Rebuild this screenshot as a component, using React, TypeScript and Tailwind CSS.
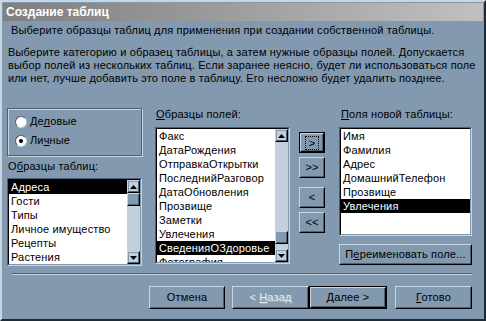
import type { ReactNode } from 'react'

// classic 3D edges in the slate-blue scheme
const raisedOuter = 'border border-t-[#c9d5e1] border-l-[#c9d5e1] border-r-black border-b-black'
const raisedInner = 'border border-t-[#8299b0] border-l-[#8299b0] border-r-[#4d5f75] border-b-[#4d5f75]'
const sunkenOuter = 'border border-t-[#4d5f75] border-l-[#4d5f75] border-r-[#c9d5e1] border-b-[#c9d5e1]'
const sunkenInner = 'border border-t-black border-l-black border-r-[#8299b0] border-b-[#8299b0]'

function Button({
  children,
  className = '',
  isDefault = false,
  focus = false,
  disabled = false,
}: {
  children: ReactNode
  className?: string
  isDefault?: boolean
  focus?: boolean
  disabled?: boolean
}) {
  const body = (
    <div className={`${raisedOuter} h-full w-full`}>
      <div
        className={`${raisedInner} h-full w-full flex items-center justify-center ${
          disabled ? 'text-[#e4ebf2] [text-shadow:1px_1px_0_#9cadbf]' : 'text-black'
        }`}
      >
        {focus ? (
          <div className="border border-dotted border-black px-[3px] leading-[12px]">{children}</div>
        ) : (
          children
        )}
      </div>
    </div>
  )
  if (isDefault) return <div className={`border border-black ${className}`}>{body}</div>
  return <div className={className}>{body}</div>
}

function Arrow({ up }: { up?: boolean }) {
  return (
    <svg width="7" height="4" viewBox="0 0 7 4">
      {up ? <path d="M3.5 0 L7 4 L0 4 Z" fill="black" /> : <path d="M0 0 L7 0 L3.5 4 Z" fill="black" />}
    </svg>
  )
}

function ScrollBtn({ up }: { up?: boolean }) {
  return (
    <div className={`${raisedOuter} h-[13px] w-full`}>
      <div className={`${raisedInner} h-full w-full flex items-center justify-center`}>
        <Arrow up={up} />
      </div>
    </div>
  )
}

function ScrollBar({ spacer }: { spacer: string }) {
  return (
    <div className="w-[13px] h-full flex flex-col bg-[#c3cfdb]">
      <ScrollBtn up />
      <div className={spacer} />
      <div className={`${raisedOuter} h-[13px] w-full`}>
        <div className={`${raisedInner} h-full w-full bg-[#8299b0]`} />
      </div>
      <div className="flex-1" />
      <ScrollBtn />
    </div>
  )
}

function ListBox({
  items,
  selected,
  className,
  scroll,
}: {
  items: string[]
  selected: number
  className: string
  scroll?: string
}) {
  return (
    <div className={`${sunkenOuter} ${className}`}>
      <div className={`${sunkenInner} h-full w-full bg-white flex overflow-hidden`}>
        <div className="flex-1 overflow-hidden">
          {items.map((it, i) => (
            <div
              key={it}
              className={`h-[14px] leading-[14px] pl-[2px] whitespace-nowrap ${
                i === selected ? 'bg-black text-white' : 'text-black'
              }`}
            >
              {it}
            </div>
          ))}
        </div>
        {scroll && <ScrollBar spacer={scroll} />}
      </div>
    </div>
  )
}

function Radio({ checked, children }: { checked?: boolean; children: ReactNode }) {
  return (
    <div className="flex items-center h-[13px]">
      <div className="w-[12px] h-[12px] rounded-full border border-t-[#4d5f75] border-l-[#4d5f75] border-r-[#c9d5e1] border-b-[#c9d5e1] bg-white flex items-center justify-center">
        {checked && <div className="w-[4px] h-[4px] rounded-full bg-black" />}
      </div>
      <span className="ml-[3px] leading-[13px]">{children}</span>
    </div>
  )
}

export default function App() {
  return (
    <div className="w-[486px] h-[321px] bg-[#8299b0] border-2 border-t-[#c9d5e1] border-l-[#c9d5e1] border-r-[#1e2a36] border-b-[#1e2a36] p-px font-['Liberation_Sans',sans-serif] text-[11px] tracking-[0.15px] text-black overflow-hidden">
      <div className="h-[18px] bg-linear-to-r from-[#7f7f7f] to-[#c0c0c0] flex items-center pl-[3px] text-white font-bold text-[12px] tracking-normal">
        Создание таблиц
      </div>

      <div className="pl-[8px] mt-[3px] leading-[13px] whitespace-nowrap">
        Выберите образцы таблиц для применения при создании собственной таблицы.
      </div>
      <div className="pl-[5px] mt-[9px] leading-[13px] whitespace-nowrap">
        Выберите категорию и образец таблицы, а затем нужные образцы полей. Допускается
        <br />
        выбор полей из нескольких таблиц. Если заранее неясно, будет ли использоваться поле
        <br />
        или нет, лучше добавить это поле в таблицу. Его несложно будет удалить позднее.
      </div>

      <div className="flex pl-[4px] mt-[23px]">
        {/* left column */}
        <div className="w-[135px] flex flex-col">
          <div className="h-[48px] border border-[#4d5f75] shadow-[inset_1px_1px_0_#c9d5e1,1px_1px_0_#c9d5e1] pl-[7px] pt-[6px]">
            <Radio>
              Де<u>л</u>овые
            </Radio>
            <div className="mt-[6px]">
              <Radio checked>
                Ли<u>ч</u>ные
              </Radio>
            </div>
          </div>
          <div className="mt-[4px] pl-px leading-[13px]">
            О<u>б</u>разцы таблиц:
          </div>
          <ListBox
            className="mt-[5px] h-[88px]"
            items={['Адреса', 'Гости', 'Типы', 'Личное имущество', 'Рецепты', 'Растения']}
            selected={0}
            scroll="h-0"
          />
        </div>

        {/* middle column */}
        <div className="ml-[13px] w-[135px] flex flex-col">
          <div className="pl-px leading-[13px]">
            <u>О</u>бразцы полей:
          </div>
          <ListBox
            className="mt-[6px] h-[137px]"
            items={[
              'Факс',
              'ДатаРождения',
              'ОтправкаОткрытки',
              'ПоследнийРазговор',
              'ДатаОбновления',
              'Прозвище',
              'Заметки',
              'Увлечения',
              'СведенияОЗдоровье',
              'Фотография',
            ]}
            selected={8}
            scroll="h-[89px]"
          />
        </div>

        {/* move buttons */}
        <div className="ml-[9px] w-[26px] flex flex-col">
          <Button className="mt-[24px] h-[21px]" isDefault focus>
            &gt;
          </Button>
          <Button className="mt-[4px] h-[21px]">&gt;&gt;</Button>
          <Button className="mt-[9px] h-[21px]">&lt;</Button>
          <Button className="mt-[4px] h-[21px]">&lt;&lt;</Button>
        </div>

        {/* right column */}
        <div className="ml-[14px] w-[133px] flex flex-col">
          <div className="pl-[2px] leading-[13px]">
            <u>П</u>оля новой таблицы:
          </div>
          <ListBox
            className="mt-[6px] h-[109px]"
            items={['Имя', 'Фамилия', 'Адрес', 'ДомашнийТелефон', 'Прозвище', 'Увлечения']}
            selected={5}
          />
          <Button className="mt-[8px] h-[21px]">
            <span>
              П<u>е</u>реименовать поле...
            </span>
          </Button>
        </div>
      </div>

      <div className="ml-[9px] mt-[7px] w-[460px] border-t border-t-[#4d5f75] border-b border-b-[#c9d5e1]" />

      <div className="flex pl-[146px] mt-[11px]">
        <Button className="w-[76px] h-[23px]">Отмена</Button>
        <Button className="ml-[7px] w-[77px] h-[23px]" disabled>
          <span>
            &lt; <u>Н</u>азад
          </span>
        </Button>
        <Button className="w-[78px] h-[23px]" isDefault>
          <span>
            <u>Д</u>алее &gt;
          </span>
        </Button>
        <Button className="ml-[8px] w-[77px] h-[23px]">
          <span>
            <u>Г</u>отово
          </span>
        </Button>
      </div>
    </div>
  )
}
